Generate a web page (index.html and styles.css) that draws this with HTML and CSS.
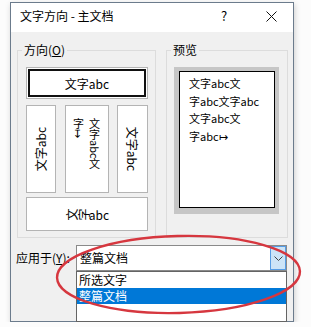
FILE: index.html
```html
<!DOCTYPE html>
<html lang="zh-CN">
<head>
  <meta charset="UTF-8">
  <meta name="viewport" content="width=device-width, initial-scale=1.0">
  <title>文字方向 - 主文档</title>
  <link rel="stylesheet" href="styles.css">
</head>
<body>
  <div class="dialog">
    <div class="titlebar">
      <span class="title">文字方向 - 主文档</span>
      <span class="help">?</span>
      <svg class="close" width="11" height="11" viewBox="0 0 11 11">
        <path d="M0.5 0.5 L10.5 10.5 M10.5 0.5 L0.5 10.5" stroke="#111" stroke-width="1" fill="none"/>
      </svg>
    </div>
    <div class="client">
      <div class="groups">
        <div class="group dir-group">
          <span class="group-label">方向(<u>O</u>)</span>
          <div class="opt opt-wide selected"><span>文字abc</span></div>
          <div class="opt-row">
            <div class="opt opt-v1"><span class="rot-ccw">文字abc</span></div>
            <div class="opt opt-v2"><span class="vert">文字abc文<br>字↦</span></div>
            <div class="opt opt-v3"><span class="rot-cw">文字abc</span></div>
          </div>
          <div class="opt opt-bottom"><span><i class="r">文</i><i class="r">字</i>abc</span></div>
        </div>
        <div class="group preview-group">
          <span class="group-label">预览</span>
          <div class="preview-frame">
            <div class="preview-page">文字abc文<br>字abc文字abc<br>文字abc文<br>字abc↦</div>
          </div>
        </div>
      </div>
      <div class="apply-row">
        <span class="apply-label">应用于(<u>Y</u>):</span>
        <div class="combo">
          <span class="combo-value">整篇文档</span>
          <span class="combo-btn">
            <svg width="9" height="5" viewBox="0 0 9 5">
              <path d="M0.5 0.5 L4.5 4.5 L8.5 0.5" stroke="#444" stroke-width="1" fill="none"/>
            </svg>
          </span>
          <ul class="combo-list">
            <li>所选文字</li>
            <li class="active">整篇文档</li>
          </ul>
        </div>
      </div>
    </div>
  </div>

  <!-- 红色圈注 -->
  <svg class="mark" width="311" height="327" viewBox="0 0 311 327">
    <ellipse cx="178.5" cy="274.5" rx="121.5" ry="38.5" transform="rotate(-1.5 178.5 274.5)"
             fill="none" stroke="#d6373f" stroke-width="2.4"/>
  </svg>
</body>
</html>
```

FILE: styles.css
```css
body {
  margin: 0;
  background-color: #fcfcfc;
  font-family: "Noto Sans CJK SC", "Noto Sans", sans-serif;
  font-size: 12px;
  color: #000;
}
.dialog {
  position: relative;
  display: flex;
  flex-direction: column;
  width: 282px;
  height: 318px;
  margin: 2px 0 0 10px;
  border: 1px solid #6b7b8c;
  box-shadow: 1px 2px 6px rgba(0, 0, 0, 0.18);
}
.titlebar {
  display: flex;
  align-items: center;
  height: 26px;
  padding: 0 0 3px 9px;
  background-color: #fff;
}
.title {
  flex: 1;
  line-height: 16px;
}
.help {
  width: 8px;
  font-size: 13px;
  line-height: 16px;
  margin-right: 37px;
}
.close {
  margin-right: 16px;
}
.client {
  flex: 1;
  padding: 18px 5px 0 6px;
  background-color: #f0f0f0;
}
.groups {
  display: flex;
  gap: 10px;
  height: 188px;
}
.group {
  position: relative;
  border: 1px solid #dcdcdc;
}
.group-label {
  position: absolute;
  top: -9px;
  left: 4px;
  padding: 0 2px;
  line-height: 16px;
  background-color: #f0f0f0;
}
.dir-group {
  width: 122px;
  padding: 16px 7px 0 8px;
}
.opt {
  display: flex;
  align-items: center;
  justify-content: center;
  box-sizing: border-box;
  background-color: #fff;
  border: 1px solid #b4b4b4;
  white-space: nowrap;
}
.opt-wide {
  height: 32px;
}
.selected {
  box-shadow: inset 0 0 0 1px #fff, inset 0 0 0 3px #111;
}
.opt-row {
  display: flex;
  justify-content: space-between;
  height: 88px;
  margin: 6px 0 4px;
}
.opt-v1 {
  width: 30px;
}
.opt-v2 {
  width: 44px;
  align-items: flex-start;
  padding-top: 12px;
}
.opt-v3 {
  width: 31px;
}
.opt-bottom {
  height: 34px;
}
.rot-ccw,
.rot-cw {
  display: inline-block;
  line-height: 14px;
}
.rot-ccw {
  transform: rotate(-90deg);
}
.rot-cw {
  transform: rotate(90deg);
}
.vert {
  writing-mode: vertical-rl;
  line-height: 16px;
  font-size: 11px;
}
.r {
  display: inline-block;
  font-style: normal;
  transform: rotate(-90deg);
}
.preview-group {
  width: 105px;
  padding: 16px 8px 0 7px;
}
.preview-frame {
  height: 139px;
  padding: 4px 4px 4px 5px;
  background-color: #c6c6c6;
}
.preview-page {
  height: 132px;
  padding: 3px 0 0 9px;
  border: 1px solid #000;
  background-color: #fff;
  font-size: 11px;
  line-height: 17.7px;
  white-space: nowrap;
}
.apply-row {
  display: flex;
  align-items: center;
  margin-top: 7px;
}
.apply-label {
  width: 60px;
  margin-left: -1px;
  line-height: 16px;
}
.combo {
  position: relative;
  display: flex;
  align-items: center;
  width: 209px;
  height: 24px;
  border: 1px solid #8a8a8a;
  background-color: #fff;
}
.combo-value {
  flex: 1;
  padding-left: 3px;
  line-height: 16px;
}
.combo-btn {
  display: flex;
  align-items: center;
  justify-content: center;
  box-sizing: border-box;
  width: 16px;
  height: 24px;
  border: 1px solid #569de5;
  background-color: #cce4f7;
}
.combo-list {
  position: absolute;
  top: 25px;
  left: -1px;
  width: 209px;
  height: 49px;
  margin: 0;
  padding: 0;
  list-style: none;
  border: 1px solid #646464;
  background-color: #fff;
}
.combo-list li {
  height: 16px;
  padding-left: 2px;
  line-height: 16px;
}
.combo-list .active {
  background-color: #0078d7;
  color: #fff;
}
.mark {
  position: absolute;
  top: 0;
  left: 0;
  pointer-events: none;
}
```
